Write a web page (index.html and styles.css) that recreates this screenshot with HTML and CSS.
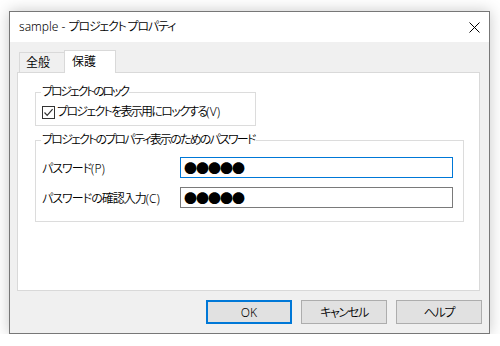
FILE: index.html
```html
<!DOCTYPE html>
<html lang="ja">
<head>
    <meta charset="UTF-8">
    <title>sample - プロジェクト プロパティ</title>
    <link rel="stylesheet" href="styles.css">
</head>
<body>
    <div class="window">
        <div class="titlebar">
            <span class="title"><span class="latin">sample - </span>プロジェクト プロパティ</span>
            <svg class="close" width="11" height="11" viewBox="0 0 11 11">
                <path d="M0.5 0.5 L10.5 10.5 M10.5 0.5 L0.5 10.5" stroke="#000" stroke-width="1" fill="none"/>
            </svg>
        </div>
        <div class="content">
            <div class="tabs">
                <div class="tab">全般</div>
                <div class="tab active">保護</div>
            </div>
            <div class="panel">
                <fieldset class="group lock">
                    <legend>プロジェクトのロック</legend>
                    <label class="check-row">
                        <span class="checkbox">
                            <svg width="11" height="11" viewBox="0 0 11 11">
                                <path d="M1.5 5.5 L4.2 8.3 L9.6 2.2" stroke="#333" stroke-width="1.2" fill="none"/>
                            </svg>
                        </span>
                        <span>プロジェクトを表示用にロックする<span class="latin">(V)</span></span>
                    </label>
                </fieldset>
                <fieldset class="group password">
                    <legend>プロジェクトのプロパティ表示のためのパスワード</legend>
                    <div class="field-row">
                        <span class="field-label">パスワード<span class="latin">(P)</span></span>
                        <div class="textbox focused"><span class="dots">●●●●●</span></div>
                    </div>
                    <div class="field-row">
                        <span class="field-label">パスワードの確認入力<span class="latin">(C)</span></span>
                        <div class="textbox"><span class="dots">●●●●●</span></div>
                    </div>
                </fieldset>
            </div>
            <div class="buttons">
                <button class="btn default"><span class="latin">OK</span></button>
                <button class="btn">キャンセル</button>
                <button class="btn">ヘルプ</button>
            </div>
        </div>
    </div>
</body>
</html>
```

FILE: styles.css
```css
body {
    margin: 0;
    background: #fff;
    font-family: "Noto Sans", "Noto Sans CJK JP", sans-serif;
    font-size: 12px;
    font-weight: 350;
    color: #000;
    letter-spacing: -1px;
    font-feature-settings: "palt";
}
.latin {
    letter-spacing: 0;
}
.window {
    box-sizing: border-box;
    width: 481px;
    height: 323px;
    margin: 11px 0 0 9px;
    border: 1px solid #777;
    background: #f0f0f0;
    box-shadow: 0 0 14px rgba(0, 0, 0, 0.22);
    display: flex;
    flex-direction: column;
}
.titlebar {
    height: 30px;
    background: #fff;
    display: flex;
    align-items: center;
    justify-content: space-between;
    padding: 0 9px 0 9px;
}
.title {
    line-height: 30px;
    letter-spacing: -1.2px;
}
.close {
    margin-top: 1px;
}
.content {
    flex: 1;
    padding: 8px 7px 0 7px;
    display: flex;
    flex-direction: column;
}
.tabs {
    display: flex;
    align-items: flex-end;
    height: 22px;
    padding-left: 2px;
}
.tab {
    box-sizing: border-box;
    height: 20px;
    width: 46px;
    padding-left: 6px;
    line-height: 19px;
    letter-spacing: 0;
    border: 1px solid #d9d9d9;
    border-bottom: none;
    background: #f0f0f0;
}
.tab.active {
    height: 23px;
    width: 52px;
    margin-left: -1px;
    margin-bottom: -1px;
    padding-left: 7px;
    line-height: 21px;
    background: #fff;
    position: relative;
}
.panel {
    box-sizing: border-box;
    height: 219px;
    margin-right: 2px;
    border: 1px solid #d9d9d9;
    background: #fff;
    padding: 11px 0 0 17px;
}
.group {
    margin: 0;
    padding: 0;
    border: 1px solid #dcdcdc;
}
.group legend {
    margin-left: 5px;
    padding: 0 1px;
    line-height: 16px;
    letter-spacing: -1.8px;
}
.lock legend {
    letter-spacing: -2.2px;
}
.lock {
    width: 221px;
    box-sizing: border-box;
    padding-bottom: 5px;
}
.check-row {
    display: flex;
    align-items: center;
    gap: 2px;
    margin-top: 4px;
    padding-left: 6px;
    line-height: 16px;
    letter-spacing: -1.7px;
}
.checkbox {
    box-sizing: border-box;
    width: 13px;
    height: 13px;
    border: 1px solid #333;
    display: flex;
    align-items: center;
    justify-content: center;
}
.password {
    width: 429px;
    box-sizing: border-box;
    margin-top: 6px;
    padding: 9px 10px 13px 0;
}
.field-row {
    display: flex;
    align-items: center;
    padding-left: 6px;
}
.field-row + .field-row {
    margin-top: 9px;
}
.field-label {
    width: 138px;
}
.textbox {
    box-sizing: border-box;
    flex: 1;
    height: 21px;
    border: 1px solid #7a7a7a;
    padding-left: 3px;
    display: flex;
    align-items: center;
}
.textbox.focused {
    border-color: #0078d7;
}
.dots {
    font-family: "Noto Sans CJK JP", sans-serif;
    font-size: 13px;
    font-weight: 400;
    letter-spacing: -1px;
    line-height: 16px;
}
.buttons {
    display: flex;
    justify-content: flex-end;
    gap: 9px;
    margin-top: 9px;
}
.btn {
    box-sizing: border-box;
    width: 86px;
    height: 24px;
    border: 1px solid #adadad;
    background: #e1e1e1;
    font: inherit;
    letter-spacing: -1.3px;
    color: #000;
    padding: 0;
}
.btn.default {
    border: 2px solid #0078d7;
}
```
